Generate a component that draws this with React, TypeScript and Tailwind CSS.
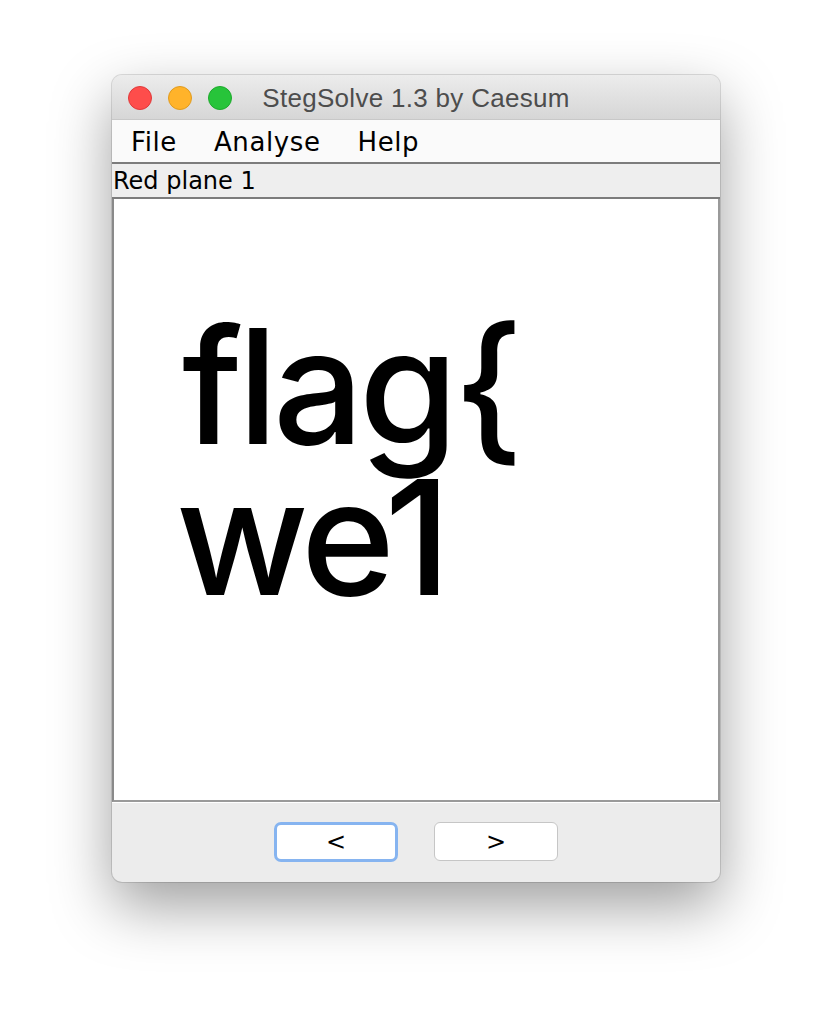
const Light = ({ bg, border }: { bg: string; border: string }) => (
  <span className={`block w-6 h-6 rounded-full border ${bg} ${border}`} />
)

const App = () => {
  return (
    <div className="min-h-[1030px] bg-white pt-[75px] pl-[112px]">
      <div className="w-[608px] rounded-[10px] bg-[#ececec] shadow-[0_24px_60px_rgba(0,0,0,0.38),0_0_0_1px_rgba(0,0,0,0.12)]">
        {/* title bar */}
        <div className="grid grid-cols-[1fr_auto_1fr] items-center h-[45px] pt-[2px] rounded-t-[10px] bg-gradient-to-b from-[#ececec] to-[#d6d6d6] border-b border-[#c8c8c8] px-4">
          <div className="flex gap-4">
            <Light bg="bg-[#fe4d4b]" border="border-[#e0393a]" />
            <Light bg="bg-[#ffb32a]" border="border-[#e09b1e]" />
            <Light bg="bg-[#27c43a]" border="border-[#1daa2c]" />
          </div>
          <div className="text-[26px] text-[#4d4d4d] font-['Liberation_Sans',sans-serif] tracking-[0.3px]">StegSolve 1.3 by Caesum</div>
          <div />
        </div>

        {/* menu */}
        <div className="flex h-[44px] items-center pt-[3px] bg-[#fafafa] border-b-2 border-[#7c7c7c] font-['DejaVu_Sans',sans-serif] text-[26px] tracking-[0.6px] text-black pl-[19px] gap-[37px]">
          <span>File</span>
          <span>Analyse</span>
          <span>Help</span>
        </div>

        {/* label */}
        <div className="h-[35px] bg-[#eeeeee] border-b-2 border-[#7c7c7c] font-['DejaVu_Sans',sans-serif] text-[24px] leading-[35px] text-black pl-[1px]">
          Red plane 1
        </div>

        {/* image */}
        <div className="h-[603px] bg-white border-x-2 border-b-2 border-l-[#8a8a8a] border-r-[#9a9a9a] border-b-[#9a9a9a] pt-[112px] pl-[62px] overflow-hidden">
          <div className="font-['Inter',sans-serif] font-medium text-[160px] leading-[151px] text-black tracking-[-5px]">
            <div className="pl-[6px]">flag{"{"}</div>
            <div>we1</div>
          </div>
        </div>

        {/* buttons */}
        <div className="h-[80px] border-t border-white rounded-b-[10px] flex justify-center items-start pt-[19px] gap-[36px] font-['DejaVu_Sans',sans-serif] text-[24px]">
          <button className="w-[124px] h-[40px] rounded-[7px] bg-white border-[3px] border-[#86b4f0] flex items-center justify-center leading-none">
            &lt;
          </button>
          <button className="w-[124px] h-[39px] rounded-[6px] bg-white border border-[#c6c6c6] flex items-center justify-center leading-none">
            &gt;
          </button>
        </div>
      </div>
    </div>
  )
}

export default App
